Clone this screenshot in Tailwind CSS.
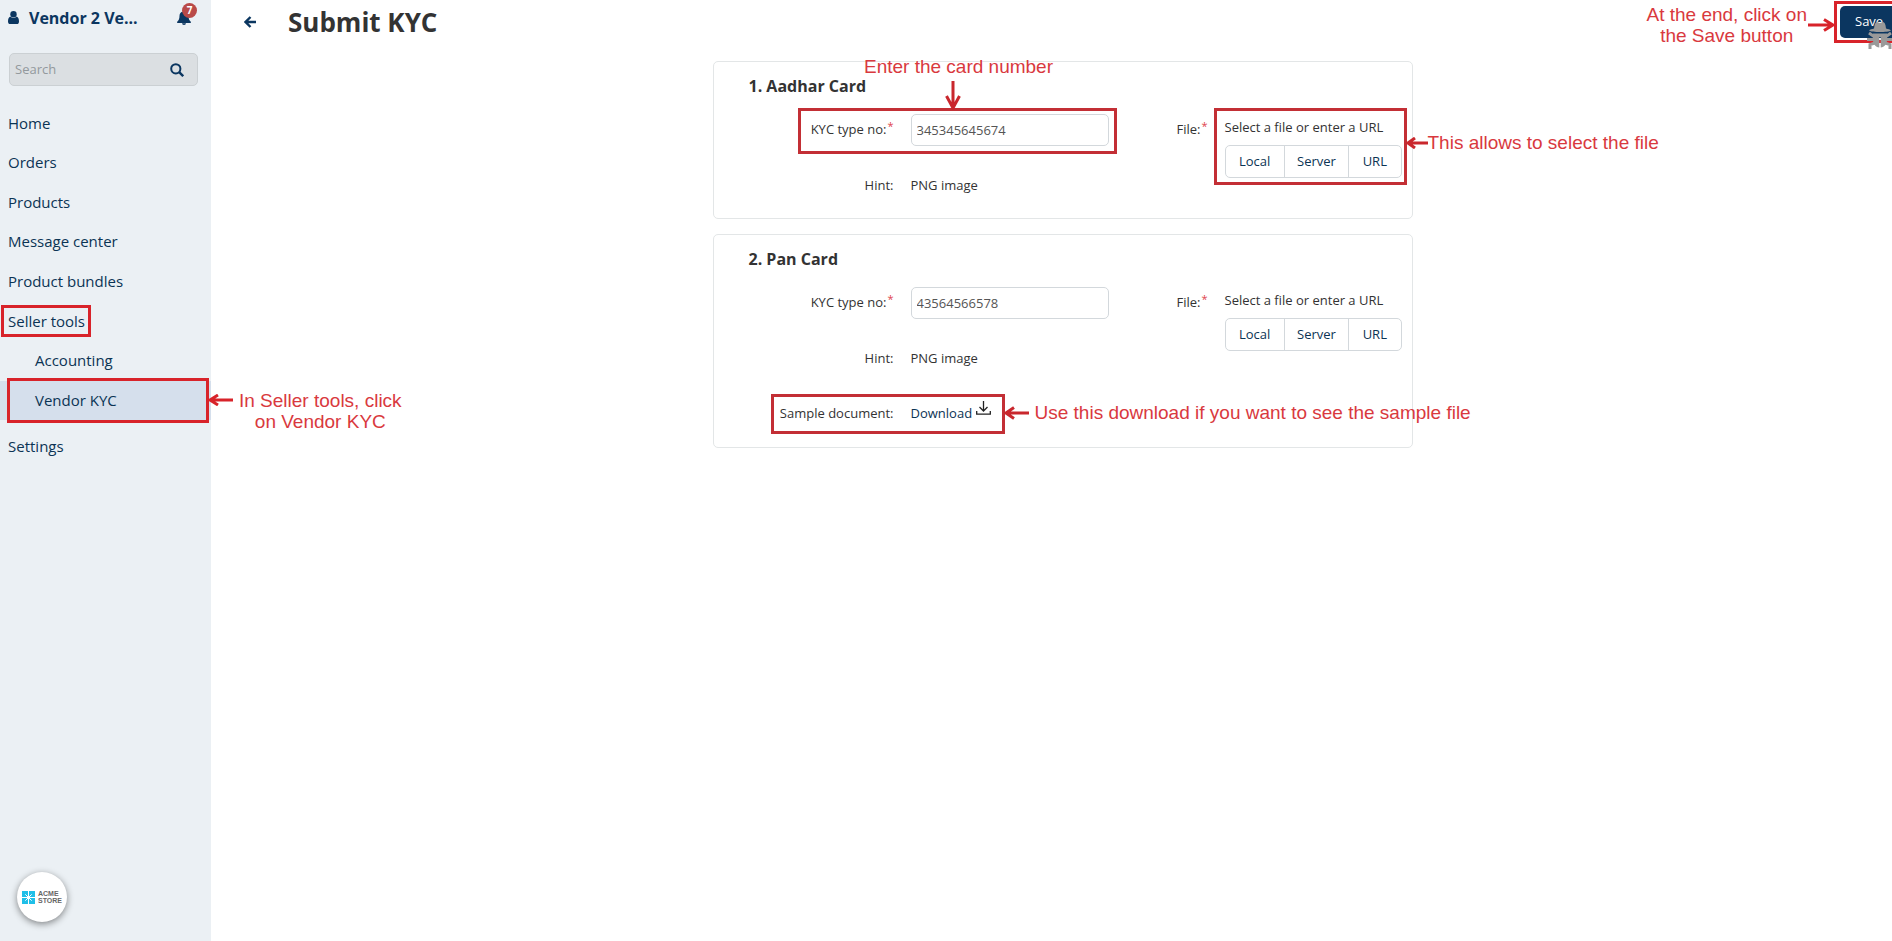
<!DOCTYPE html>
<html lang="en">
<head>
<meta charset="utf-8">
<meta name="viewport" content="width=device-width, initial-scale=1">
<title>Submit KYC</title>
<script src="https://cdn.jsdelivr.net/npm/@tailwindcss/browser@4"></script>
</head>
<body class="flex min-h-screen overflow-x-hidden bg-white font-['Open_Sans','Noto_Sans',sans-serif] text-[13px] text-[#333]">

<aside class="flex w-[211px] shrink-0 flex-col bg-[#ebf0f4] text-[#0b3454]">
  <div class="flex h-[35px] items-center pr-5 pl-2">
    <svg class="h-[13px] w-[11px] shrink-0" viewBox="0 0 11 13" fill="#0b3660"><circle cx="5.500" cy="3.200" r="3.200"/><path d="M2.300 5.600C.8 6.300 0 8 0 10.400 0 12 .8 13 2.200 13h6.600C10.200 13 11 12 11 10.400 11 8 10.200 6.300 8.700 5.600 7.900 6.500 6.800 7 5.500 7s-2.400-.5-3.200-1.400Z"/></svg>
    <a href="#" class="ml-[10px] text-base font-bold whitespace-nowrap text-[#0b3660]">Vendor 2 Ve...</a>
    <button type="button" aria-label="Notifications" class="relative ml-auto h-[15px] w-[14px]">
      <svg class="h-[15px] w-[14px]" viewBox="0 0 14 15" fill="#0b3660"><path d="M7 0c.6 0 1 .4 1 1v.5c2.200.4 3.500 2 3.500 4.300 0 3.200.8 4.700 2.500 6.200 0 .6-.4 1-1 1H1c-.6 0-1-.4-1-1 1.700-1.500 2.500-3 2.500-6.200C2.500 3.500 3.800 1.900 6 1.500V1c0-.6.4-1 1-1Z"/><path d="M5 13.200h4a2 1.800 0 0 1-4 0Z"/></svg>
      <span class="absolute -top-[7px] left-[5px] flex size-[15px] items-center justify-center rounded-full bg-[#b94a48] text-[10px] font-bold text-white">7</span>
    </button>
  </div>

  <form class="mt-[18px] mr-[13px] ml-[9px] flex h-[33px] items-center rounded-[5px] border border-[#cbd0d3] bg-[#dbdfe2] pr-[13px] pl-[5px]">
    <input type="search" aria-label="Search" placeholder="Search" class="min-w-0 flex-1 bg-transparent outline-none placeholder:text-[#93999d]">
    <button type="submit" aria-label="Search"><svg class="size-[14px]" viewBox="0 0 14 14" fill="none" stroke="#0b3660" stroke-width="2"><circle cx="5.800" cy="5.800" r="4.600"/><path d="m9.200 9.200 4 4" stroke-width="2.400"/></svg></button>
  </form>

  <nav class="mt-[18px] flex flex-col gap-px text-[15px] leading-[39px]">
    <div class="flex flex-col">
      <a href="#" class="pl-2">Home</a>
      <a href="#" class="pl-2">Orders</a>
    </div>
    <div class="flex flex-col">
      <a href="#" class="pl-2">Products</a>
      <a href="#" class="pl-2">Message center</a>
    </div>
    <a href="#" class="pl-2">Product bundles</a>
    <div class="flex flex-col">
      <a href="#" class="relative pl-2">Seller tools
        <span class="absolute top-[3px] left-px h-8 w-[90px] border-3 border-[#d8232a]"></span>
      </a>
      <a href="#" class="pl-[35px]">Accounting</a>
    </div>
    <a href="#" class="relative bg-[#d5dfec] pl-[35px]">Vendor KYC
      <span class="absolute -inset-y-[3px] right-[2px] left-[7px] border-3 border-[#d8232a]"></span>
      <span class="absolute top-[9px] left-[208px] z-10 flex items-start gap-[6px] text-center font-['Liberation_Sans',sans-serif] text-[19px] leading-[21px] whitespace-nowrap text-[#d9393e]">
        <svg class="mt-1 h-[12px] w-[25px]" viewBox="0 0 25 12" fill="none" stroke="#d8232a" stroke-width="3"><path d="M2 6h23M10 1 2 6l8 5"/></svg>
        <span>In Seller tools, click<br>on Vendor KYC</span>
      </span>
    </a>
    <a href="#" class="mt-[6px] pl-2">Settings</a>
  </nav>

  <a href="#" aria-label="Acme Store" class="mt-auto mb-[19px] ml-[17px] flex size-[50px] items-center gap-[3px] rounded-full bg-white pl-[5px] shadow-[0_2px_7px_rgba(0,0,0,0.45)]">
    <svg class="size-[13px] shrink-0" viewBox="0 0 13 13"><path fill="#1fbfe8" d="M0 0h6v6H0zM7 0h6v6H7zM0 7h6v6H0zM7 7h6v6H7z"/><path stroke="#fff" d="M6.500 2v9M2 6.500h9M3.300 3.300l6.400 6.400M9.700 3.300 3.300 9.700"/><circle cx="6.500" cy="6.500" r="1.800" fill="#fff"/></svg>
    <span class="font-['Liberation_Sans',sans-serif] text-[7px] leading-[7px] font-bold text-[#666]">ACME<br>STORE</span>
  </a>
</aside>

<main class="min-w-0 flex-1 overflow-x-clip">
  <header class="flex h-11 items-center pl-[33px]">
    <button type="button" aria-label="Back"><svg class="h-[12px] w-[12px]" viewBox="0 0 12 12" fill="none" stroke="#0b3660" stroke-width="2.400"><path d="M12 6H2M6.500 1 1.500 6l5 5"/></svg></button>
    <h1 class="ml-8 text-[26px] font-bold">Submit KYC</h1>
    <div class="relative -mr-[10px] ml-auto">
      <button type="button" class="h-8 w-[62px] rounded-[5px] bg-[#0b3660] pl-[15px] text-left text-white">Save</button>
      <span class="absolute -inset-x-[6px] -top-[5px] h-[42px] border-3 border-[#d8232a]"></span>
      <span class="absolute -top-[2px] right-[67px] flex items-center gap-px text-center font-['Liberation_Sans',sans-serif] text-[19px] leading-[21px] whitespace-nowrap text-[#d9393e]">
        <span>At the end, click on<br>the Save button</span>
        <svg class="h-[14px] w-[27px]" viewBox="0 0 27 14" fill="none" stroke="#d8232a" stroke-width="3"><path d="M0 7h25M16 1.500 25 7l-9 5.500"/></svg>
      </span>
      <svg class="absolute top-4 left-[27px] h-[27px] w-[26px]" viewBox="2 0 26 27" fill="#999" stroke="#999"><path stroke="none" d="M9 6.500C9.500 2 10.500 0 12 0c1.200 0 2 1 3 1s1.800-1 3-1c1.500 0 2.500 2 3 6.500 2 .5 4 1 5 2-3 2-19 2-22 0 1-1 3-1.500 5-2Z"/><path stroke="none" d="M8 11.500h14V18c0 4-2.500 7-6.300 7.500V15h-1.400v10.500C10.500 25 8 22 8 18Z"/><path fill="none" stroke-width="3" d="M9 14.500 4 11M9 17.500H2M10 21l-5 1.500V27M21 14.500l5-3.500M21 17.500h7M20 21l5 1.500V27"/></svg>
    </div>
  </header>

  <form class="mx-auto flex w-[722px] flex-col gap-[15px] pt-[17px] pl-[22px]">
    <section class="rounded-[5px] border border-[#e3e6e7] pt-3 pb-4">
      <h2 class="mb-4 pl-[35px] text-base leading-6 font-bold">1. Aadhar Card</h2>
      <div class="grid grid-cols-[181px_198px_84px_1fr] gap-x-4 gap-y-6">
        <label for="kyc1" class="flex h-8 items-center justify-end gap-px pr-px">KYC type no:<span class="mb-2 text-[11px] leading-3 text-[#e0444c]">*</span></label>
        <div class="relative h-8">
          <input id="kyc1" type="text" value="345345645674" class="h-8 w-full rounded-[5px] border border-[#d3d8dc] px-[5px] text-[#555]">
          <span class="absolute -top-[6px] -right-2 h-[46px] w-[319px] border-3 border-[#c32f35]"></span>
          <span class="absolute -top-[58px] -left-[47px] flex w-[190px] flex-col items-center gap-1 font-['Liberation_Sans',sans-serif] text-[19px] leading-[21px] whitespace-nowrap text-[#d9393e]">
            Enter the card number
            <svg class="mr-3 h-[29px] w-[16px]" viewBox="0 0 16 29" fill="none" stroke="#c9272d" stroke-width="3"><path d="M8 0v27M1.500 15 8 27l6.500-12"/></svg>
          </span>
        </div>
        <div class="flex h-8 items-center justify-end gap-px pr-px"><span id="file1">File:</span><span class="mb-2 text-[11px] leading-3 text-[#e0444c]">*</span></div>
        <div role="group" aria-labelledby="file1" class="relative row-span-2 pt-[3px]">
          <p class="leading-5">Select a file or enter a URL</p>
          <div class="mt-2 flex h-[33px] w-[177px] divide-x divide-[#d3d8dc] rounded-[5px] border border-[#d3d8dc] text-[#0b3454]">
            <button type="button" class="flex-[59]">Local</button><button type="button" class="flex-[64]">Server</button><button type="button" class="flex-[52]">URL</button>
          </div>
          <span class="absolute -top-[6px] -left-[11px] h-[77px] w-[193px] border-3 border-[#c32f35]"></span>
          <span class="absolute top-[18px] left-[181px] flex items-center font-['Liberation_Sans',sans-serif] text-[19px] leading-[21px] whitespace-nowrap text-[#d9393e]">
            <svg class="h-[12px] w-[22px]" viewBox="0 0 22 12" fill="none" stroke="#c9272d" stroke-width="3"><path d="M2 6h20M9 1 2 6l7 5"/></svg>
            This allows to select the file
          </span>
        </div>
        <span class="flex h-8 items-center justify-end pr-px">Hint:</span>
        <span class="flex h-8 items-center">PNG image</span>
      </div>
    </section>

    <section class="rounded-[5px] border border-[#e3e6e7] pt-3 pb-4">
      <h2 class="mb-4 pl-[35px] text-base leading-6 font-bold">2. Pan Card</h2>
      <div class="grid grid-cols-[181px_198px_84px_1fr] gap-x-4 gap-y-6">
        <label for="kyc2" class="flex h-8 items-center justify-end gap-px pr-px">KYC type no:<span class="mb-2 text-[11px] leading-3 text-[#e0444c]">*</span></label>
        <input id="kyc2" type="text" value="43564566578" class="h-8 w-full rounded-[5px] border border-[#d3d8dc] px-[5px] text-[#555]">
        <div class="flex h-8 items-center justify-end gap-px pr-px"><span id="file2">File:</span><span class="mb-2 text-[11px] leading-3 text-[#e0444c]">*</span></div>
        <div role="group" aria-labelledby="file2" class="row-span-2 pt-[3px]">
          <p class="leading-5">Select a file or enter a URL</p>
          <div class="mt-2 flex h-[33px] w-[177px] divide-x divide-[#d3d8dc] rounded-[5px] border border-[#d3d8dc] text-[#0b3454]">
            <button type="button" class="flex-[59]">Local</button><button type="button" class="flex-[64]">Server</button><button type="button" class="flex-[52]">URL</button>
          </div>
        </div>
        <span class="flex h-8 items-center justify-end pr-px">Hint:</span>
        <span class="flex h-8 items-center">PNG image</span>
        <span class="col-start-1 flex h-8 items-center justify-end pr-px pb-[2px]">Sample document:</span>
        <div class="relative col-start-2 h-8">
          <a href="#" class="flex h-8 items-center gap-1 pb-[2px] text-[#0b3454]">Download
            <svg class="mb-3 h-[14px] w-[15px]" viewBox="0 0 15 14" fill="none" stroke="#222" stroke-width="1.300"><path d="M7.500 0v10M3.500 6l4 4 4-4M.700 10v3.200h13.600V10"/></svg>
          </a>
          <span class="absolute -top-[5px] -left-[140px] h-10 w-[234px] border-3 border-[#c32f35]"></span>
          <span class="absolute top-[3px] left-[93px] flex items-center gap-[6px] font-['Liberation_Sans',sans-serif] text-[19px] leading-[21px] whitespace-nowrap text-[#d9393e]">
            <svg class="h-[14px] w-[25px]" viewBox="0 0 25 14" fill="none" stroke="#c9272d" stroke-width="3"><path d="M2 7h23M10 1.500 2 7l8 5.500"/></svg>
            Use this download if you want to see the sample file
          </span>
        </div>
      </div>
    </section>
  </form>
</main>
</body>
</html>
